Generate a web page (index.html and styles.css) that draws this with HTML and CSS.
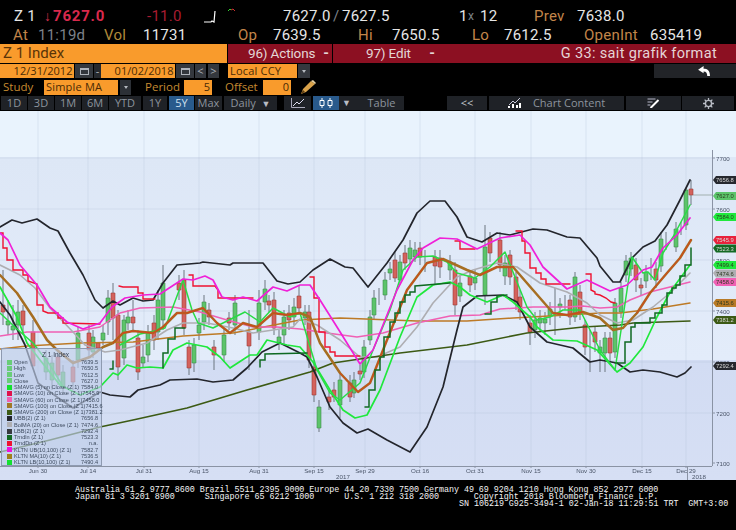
FILE: index.html
```html
<!DOCTYPE html>
<html lang="en">
<head>
<meta charset="utf-8">
<title>Z 1 Index</title>
<link rel="stylesheet" href="styles.css">
</head>
<body>
<div class="screen">
  <header class="quote">
    <div class="qrow qrow1">
      <span class="w">Z 1</span><span class="arrow">↓</span><span class="last">7627.0</span><span class="chg">-11.0</span>
      <svg class="spark" viewBox="0 0 14 16"><path d="M0 14H7L8 13L10 14L11 3" fill="none" stroke="#fff" stroke-width="1.2"/></svg>
      <svg class="mini" viewBox="0 0 8 4"><path d="M0 3L2 1L3 2" fill="none" stroke="#3c3" stroke-width="1"/><path d="M3 2L5 1L7 3" fill="none" stroke="#c33" stroke-width="1"/></svg>
      <span class="w">7627.0</span><span class="g">/</span><span class="w">7627.5</span><span class="w">1</span><span class="g sm">x</span><span class="w">12</span><span class="o">Prev</span><span class="w">7638.0</span>
    </div>
    <div class="qrow qrow2">
      <span class="o">At</span><span class="g">11:19d</span><span class="o2">Vol</span><span class="w">11731</span><span class="o">Op</span><span class="w">7639.5</span><span class="o">Hi</span><span class="w">7650.5</span><span class="o">Lo</span><span class="w">7612.5</span><span class="o">OpenInt</span><span class="w">635419</span>
    </div>
  </header>

  <div class="bars">
    <div class="bar-sec">Z 1 Index</div>
    <div class="bar-act bar-a"><span class="act-txt">96) Actions</span><span class="dash">-</span></div>
    <div class="bar-act bar-e"><span class="act-txt">97) Edit</span><span class="dash">-</span></div>
    <div class="bar-title">G 33: sait grafik format</div>
  </div>

  <div class="dates">
    <div class="fld f-date">12/31/2012</div>
    <div class="btn b-cal"><svg class="ico-cal" viewBox="0 0 9 8"><path d="M0 1H9V8H0Z" fill="#aeb3ba"/><path d="M1 3H8V7H1Z" fill="#33373d"/></svg></div>
    <div class="btn b-dash">-</div>
    <div class="fld f-date">01/02/2018</div>
    <div class="btn b-cal"><svg class="ico-cal" viewBox="0 0 9 8"><path d="M0 1H9V8H0Z" fill="#aeb3ba"/><path d="M1 3H8V7H1Z" fill="#33373d"/></svg></div>
    <div class="btn b-nav">&lt;</div>
    <div class="btn b-nav">&gt;</div>
    <div class="fld f-ccy">Local CCY</div>
    <div class="btn b-drop"><span class="tri"></span></div>
    <div class="undo"><svg class="ico-undo" viewBox="0 0 14 12"><path d="M0 4L6 0V3C10 3 13 5 13 11L10 11C10 8 9 6 6 6V8Z" fill="#fff"/></svg></div>
  </div>

  <div class="study">
    <span class="lab l-study">Study</span>
    <div class="fld f-study">Simple MA</div>
    <div class="btn b-drop2"><span class="tri"></span></div>
    <span class="lab l-period">Period</span>
    <div class="fld f-num">5</div>
    <span class="lab l-offset">Offset</span>
    <div class="fld f-num">0</div>
    <svg class="ico-pen" viewBox="0 0 15 14"><path d="M0 14L2 9L10 1L14 4L5 12Z" fill="#d9a24a"/><path d="M10 1L12 0L15 3L14 4Z" fill="#e8d3a5"/><path d="M0 14L2 10L4 12Z" fill="#5a3a10"/></svg>
  </div>

  <nav class="tools">
    <div class="t t-n">1D</div><div class="t t-n">3D</div><div class="t t-n">1M</div><div class="t t-n">6M</div>
    <div class="t t-ytd">YTD</div><div class="t t-1y">1Y</div><div class="t t-5y">5Y</div><div class="t t-max">Max</div>
    <div class="t t-daily">Daily <span class="dn">▼</span></div>
    <div class="t t-ic t-line"><svg class="ic14" viewBox="0 0 14 10"><path d="M0.5 0V9.5H14" fill="none" stroke="#aab" stroke-width="1"/><path d="M2 8L6 4L8 6L13 1" fill="none" stroke="#dde" stroke-width="1"/></svg></div>
    <div class="t t-ic t-candle"><svg class="ic14" viewBox="0 0 14 10"><path d="M3 0V10M11 0V10" stroke="#fff"/><path d="M1 2.500H5V7.500H1ZM9 2.500H13V7.500H9Z" fill="#295a8c" stroke="#fff"/></svg><span class="dn dn2">▼</span></div>
    <div class="t t-table">Table</div>
    <div class="t t-back">&lt;&lt;</div>
    <div class="t t-cc"><svg class="ic13" viewBox="0 0 13 10"><path d="M1 7L5 3L7 5L12 0" fill="none" stroke="#ccd" stroke-width="1"/><path d="M0 8H2V10H0ZM4 6H6V10H4ZM8 7H10V10H8ZM11 5H13V10H11Z" fill="#fff"/></svg><span>Chart Content</span></div>
    <div class="t t-edit"><svg class="ic13" viewBox="0 0 12 10"><path d="M0 1H8M0 4H5M0 7H3" stroke="#bbc" stroke-width="1"/><path d="M3 10L11 2" stroke="#fff" stroke-width="2"/></svg></div>
    <div class="t t-gear"><svg class="ic11" viewBox="0 0 12 12"><circle cx="6" cy="6" r="3.400" fill="none" stroke="#b8bcc4" stroke-width="1.600"/><path d="M6 0V2.500M6 9.500V12M0 6H2.500M9.500 6H12M1.800 1.800L3.500 3.500M8.500 8.500L10.200 10.200M1.800 10.200L3.500 8.500M8.500 3.500L10.200 1.800" stroke="#b8bcc4" stroke-width="1.400"/></svg></div>
  </nav>

  <main class="chart">
    <svg class="plot" viewBox="0 111 736 369" width="736" height="369">
      <defs>
        <linearGradient id="upper" x1="0" y1="0" x2="0" y2="1"><stop offset="0" stop-color="#dde7f6"/><stop offset="1" stop-color="#e3ecfa"/></linearGradient>
        <linearGradient id="lower" x1="0" y1="0" x2="0" y2="1"><stop offset="0" stop-color="#d2dcf3"/><stop offset="1" stop-color="#d6dff4"/></linearGradient>
      </defs>
      <rect x="0" y="111" width="736" height="46" fill="#e9f3fd"/>
      <rect x="0" y="157" width="736" height="203" fill="url(#upper)"/>
      <rect x="0" y="360" width="736" height="120" fill="url(#lower)"/>
      <path class="grid" d="M38 111V466M88 111V466M144 111V466M199 111V466M259 111V466M314 111V466M365 111V466M420 111V466M475 111V466M531 111V466M586 111V466M642 111V466M686 111V466M0 158H712M0 209H712M0 260H712M0 311H712M0 362H712M0 413H712"/>

      <path class="wick" d="M3 270V325M8 300V335M13 305V340M18 300V340M23 305V335M33 320V366M46 350V380M52 355V390M58 350V385M63 365V395M73 360V390M78 327V368M89 325V358M93 330V358M103 325V345M108 290V335M113 283V340M118 310V380M124 315V365M128 310V330M133 300V330M138 330V380M143 345V368M148 325V362M154 315V350M158 290V340M163 265V330M179 275V300M184 270V335M189 340V375M194 338V372M199 318V340M204 295V330M209 303V325M214 340V370M224 328V362M229 312V330M235 295V335M249 310V370M259 290V340M265 280V310M269 295V312M274 292V335M279 330V350M284 310V345M289 305V330M294 298V325M299 285V315M305 305V325M309 305V368M314 360V402M319 400V432M329 390V410M334 382V402M340 372V418M350 375V402M354 372V398M360 365V380M364 340V378M370 310V345M374 290V320M379 288V305M385 272V300M390 262V280M395 252V282M400 255V285M405 245V270M410 240V265M415 242V262M420 242V265M425 250V272M435 250V285M440 250V278M450 255V280M455 262V315M460 275V302M470 270V292M475 270V290M485 225V305M490 232V262M500 232V272M505 255V285M510 250V285M516 272V310M520 290V320M530 315V345M535 312V338M540 310V332M545 312V335M550 302V325M555 288V335M560 298V318M565 295V310M570 295V325M575 272V322M580 285V320M585 320V355M590 330V372M595 326V352M600 340V372M605 332V372M610 332V362M615 298V358M621 282V318M626 255V282M631 252V276M636 258V292M641 278V296M646 265V288M651 258V280M656 262V288M661 232V272M666 232V250M676 222V252M681 222V235M686 188V230M691 180V205"/>

      <path class="green-b" d="M6 321h4v4h-4zM11 326h4v4h-4zM16 312h4v13h-4zM44 358h4v14h-4zM50 363h4v17h-4zM61 372h4v15h-4zM76 333h4v27h-4zM91 337h4v15h-4zM101 333h4v7h-4zM106 298h4v24h-4zM122 320h4v38h-4zM126 317h4v6h-4zM141 357h4v6h-4zM146 333h4v22h-4zM156 300h4v32h-4zM161 283h4v37h-4zM192 345h4v18h-4zM197 325h4v8h-4zM202 302h4v20h-4zM222 335h4v20h-4zM233 303h4v22h-4zM257 303h4v29h-4zM263 289h4v13h-4zM277 337h4v6h-4zM282 317h4v18h-4zM292 307h4v10h-4zM303 312h4v6h-4zM317 407h4v21h-4zM338 380h4v25h-4zM352 380h4v13h-4zM362 347h4v25h-4zM368 317h4v23h-4zM372 298h4v17h-4zM383 280h4v15h-4zM388 269h4v4h-4zM398 262h4v18h-4zM408 248h4v11h-4zM413 250h4v7h-4zM448 262h4v8h-4zM458 283h4v13h-4zM473 278h4v5h-4zM483 247h4v48h-4zM503 263h4v13h-4zM533 320h4v10h-4zM538 318h4v5h-4zM543 319h4v4h-4zM548 309h4v7h-4zM558 304h4v3h-4zM573 277h4v40h-4zM598 347h4v6h-4zM603 338h4v15h-4zM613 303h4v49h-4zM619 288h4v24h-4zM624 261h4v14h-4zM629 258h4v11h-4zM644 272h4v9h-4zM659 239h4v27h-4zM674 229h4v18h-4zM684 190h4v35h-4z"/>
      <path class="red-b" d="M1 305h4v7h-4zM21 311h4v14h-4zM31 332h4v34h-4zM56 357h4v18h-4zM71 367h4v15h-4zM87 333h4v17h-4zM96 343h4v5h-4zM111 293h4v25h-4zM116 315h4v52h-4zM131 317h4v6h-4zM136 338h4v34h-4zM152 323h4v17h-4zM177 283h4v7h-4zM182 280h4v48h-4zM187 347h4v21h-4zM207 310h4v7h-4zM212 347h4v8h-4zM227 318h4v5h-4zM247 332h4v14h-4zM267 301h4v4h-4zM272 300h4v28h-4zM287 313h4v7h-4zM297 296h4v12h-4zM307 312h4v48h-4zM312 367h4v28h-4zM327 397h4v5h-4zM332 390h4v7h-4zM348 383h4v14h-4zM358 371h4v3h-4zM393 260h4v18h-4zM403 253h4v10h-4zM418 248h4v9h-4zM433 257h4v9h-4zM438 258h4v9h-4zM453 270h4v35h-4zM468 276h4v9h-4zM488 238h4v15h-4zM498 240h4v25h-4zM508 255h4v22h-4zM514 277h4v25h-4zM518 297h4v15h-4zM528 323h4v9h-4zM568 300h4v17h-4zM578 292h4v21h-4zM583 325h4v22h-4zM593 332h4v10h-4zM608 338h4v15h-4zM634 265h4v15h-4zM639 285h4v3h-4zM654 269h4v11h-4zM689 189h4v6h-4z"/>

      <path class="l-orange" d="M0 349L27 346L80 343L133 342L183 336L233 333L300 320L340 318L417 321L467 321L513 318L567 315L600 313L620 313L653 309L690 303"/>
      <path class="l-pink" d="M0 336L27 332L73 332L100 327L120 313L140 308L173 307L200 312L227 320L253 327L277 327L300 329L327 333L357 337L383 333L417 323L450 316L480 315L500 309L533 307L567 307L583 306L600 308L617 307L630 300L650 292L670 287L690 282"/>
      <path class="l-grey" d="M0 265L20 275L35 288L50 308L73 332L85 345L105 352L120 350L147 343L167 330L183 323L207 323L233 328L253 333L293 327L300 319L317 325L340 340L360 357L377 357L400 347L417 327L433 303L457 277L473 270L497 263L517 267L540 283L567 292L587 303L600 315L617 323L633 320L653 307L670 293L690 273"/>
      <path class="l-dkgreen" d="M0 452L50 440L100 427L133 420L187 408L247 390L310 372L333 363L400 353L467 345L527 333L583 327L620 325L633 323L690 321"/>
      <path class="l-black" d="M0 227L12 220L22 223L37 219L50 228L58 231L70 253L83 275L95 300L103 308L113 301L120 305L133 298L143 301L153 300L163 283L177 265L200 263L203 262L230 265L233 263L263 263L277 281L288 284L300 282L313 270L330 259L345 267L353 268L368 287L387 263L403 240L417 213L430 201L445 201L457 217L467 237L482 242L497 233L510 235L533 229L547 230L567 237L580 238L597 258L600 266L613 282L620 282L632 258L643 247L655 241L667 225L680 200L690 180"/>
      <path class="l-black" d="M0 302L10 315L25 345L38 383L57 397L73 408L90 398L100 392L110 395L130 397L138 390L160 385L170 380L197 379L213 382L233 380L247 368L262 352L280 343L300 353L307 357L317 377L330 407L343 423L357 433L368 429L387 440L410 452L427 427L443 387L457 330L463 307L477 296L503 295L517 302L530 327L547 342L573 348L590 362L600 360L617 363L630 372L643 370L660 372L677 377L685 373L691 367"/>
      <path class="l-lime" d="M0 287L17 317L27 343L40 360L60 385L80 395L100 387L113 373L118 375L127 365L137 368L150 367L163 368L173 350L187 343L207 347L220 357L230 368L250 355L257 355L267 340L287 345L300 347L313 362L330 390L343 410L355 418L367 415L380 390L400 337L417 297L433 285L450 282L460 287L470 295L487 302L503 295L513 302L530 317L537 327L553 340L577 341L597 350L617 372L630 363L643 347L657 317L670 292L690 265"/>
      <path class="l-lime2" d="M0 313L17 329L33 343L50 365L62 385M120 345L140 334L150 332L165 328L183 280L192 310L198 323L213 328L245 312L260 322L273 308L290 317L300 313L317 370L330 393L340 400L360 383L373 350L390 310L403 270L417 257L433 256L447 262L457 273L475 278L490 267L505 252L515 277L527 307L537 320L550 317L563 310L580 310L590 330L600 350L615 370L620 337L632 257L643 273L648 272L655 280L663 253L673 237L690 205"/>
      <path class="l-brown" d="M0 275L17 293L33 317L47 340L57 350L73 363L90 357L103 347L113 343L123 333L133 331L153 333L163 327L177 313L187 313L203 308L217 323L230 333L243 323L257 327L273 313L287 315L300 313L310 317L320 343L340 373L358 392L370 383L387 340L407 290L427 263L443 259L467 270L480 275L497 267L513 267L533 290L553 313L567 315L583 312L600 318L613 330L623 328L637 313L650 293L667 273L680 258L691 240"/>
      <path class="l-redline" d="M113 343L123 333L133 331L153 333L163 327L177 313L187 313L203 308L217 323L230 333L243 323L257 327L273 313L287 315L300 313M340 373L358 392L370 383L387 340L407 290L427 263L443 259M480 275L497 267L513 267M553 313L567 315L583 312M637 313L650 293L667 273L680 258L691 240"/>
      <path class="l-step-g" d="M110 369L113 369L113 361M163 368L163 353L168 353L168 339L175 339L175 328L185 328M260 367L260 360L265 360L265 354L307 353M365 407L369 407L369 390L375 390L375 370L380 370L380 357L384 357L384 337L390 337L390 322L395 322L395 313L400 313L400 302L405 302L405 295L410 295L410 292L415 292L415 286L450 283M485 314L491 314L491 302L497 302L497 296L507 295M615 363L625 363L625 342L631 342L631 327L635 327L635 323L650 323L650 318L655 318L655 313L662 313L662 305L667 305L667 293L672 293L672 288L676 288L676 285L680 285L680 276L685 276L685 265L691 265L691 248"/>
      <path class="l-step-r" d="M0 233L3 233L3 248L7 248L7 260L13 260L13 270L23 270L23 275L28 275L28 281L37 284L37 305L43 305L43 311L48 313L58 313L58 318L63 318L63 323L100 324M119 286L123 287L138 287L138 293L143 293L143 299L155 299M189 275L193 275L193 286L215 286L218 290L218 298L253 298M310 277L314 277L314 298L319 298L319 332L325 332L325 347L330 347L330 352L335 352L335 356L360 356M455 241L460 241L460 249L475 249M516 231L522 231L522 241L525 241L525 253L530 253L530 268L536 268L536 273L541 273L541 279L546 279L546 284L570 284M586 274L591 274L591 290L595 292L595 294L600 295L606 298L611 302L615 303"/>
      <path class="l-magenta" d="M0 233L8 240L20 265L37 285L50 307L67 322L83 329L100 323L112 307L125 298L143 295L160 294L183 279L193 280L205 276L213 280L222 297L233 300L243 297L257 301L273 287L287 291L300 285L310 285L320 300L337 327L360 364L373 350L397 290L413 260L423 248L440 238L457 239L477 249L500 238L520 235L530 245L543 267L567 289L587 280L610 291L627 285L643 270L652 267L663 248L677 235L690 218"/>

      <path class="axis" d="M712.500 150V466M0 466.500H712M687.500 466V480"/>
      <path class="axis" d="M712 158h3M712 209h3M712 260h3M712 311h3M712 362h3M712 413h3M712 463h3M38 466v2M88 466v2M144 466v2M199 466v2M259 466v2M314 466v2M365 466v2M420 466v2M475 466v2M531 466v2M586 466v2M642 466v2M686 466v2"/>
      <path class="guide" d="M693 195H713"/>

      <g class="ylab">
        <text x="716" y="160.500">7700</text><text x="716" y="211.500">7600</text><text x="716" y="262.500">7500</text><text x="716" y="313.500">7400</text><text x="716" y="364.500">7300</text><text x="716" y="415.500">7200</text><text x="716" y="465.500">7100</text>
      </g>
      <g class="xlab">
        <text x="38" y="473">Jun 30</text><text x="88" y="473">Jul 14</text><text x="144" y="473">Jul 31</text><text x="199" y="473">Aug 15</text><text x="259" y="473">Aug 31</text><text x="314" y="473">Sep 15</text><text x="365" y="473">Sep 29</text><text x="420" y="473">Oct 16</text><text x="475" y="473">Oct 31</text><text x="531" y="473">Nov 15</text><text x="586" y="473">Nov 30</text><text x="642" y="473">Dec 15</text><text x="686" y="473">Dec 29</text>
        <text x="343" y="479">2017</text><text x="699" y="479">2018</text>
      </g>
      <g class="tags">
        <path class="tg-black" d="M713 180L716 176H736V184H716Z"/><text class="tx-l" x="716" y="182">7656.8</text>
        <path class="tg-cl" d="M713 196L716 192H736V200H716Z"/><text x="716" y="198">7627.0</text>
        <path class="tg-lime" d="M713 217L716 213H736V221H716Z"/><text x="716" y="219">7584.0</text>
        <path class="tg-red" d="M713 240L716 236H736V244H716Z"/><text class="tx-l" x="716" y="242">7545.9</text>
        <path class="tg-dk" d="M713 248L716 244.500H736V252.500H716Z"/><text class="tx-l" x="716" y="250.500">7523.3</text>
        <path class="tg-lime" d="M713 265L716 261H736V269H716Z"/><text x="716" y="267">7499.4</text>
        <path class="tg-grey" d="M713 273L716 269.500H736V277.500H716Z"/><text x="716" y="275.500">7474.6</text>
        <path class="tg-pink" d="M713 282L716 278H736V286H716Z"/><text x="716" y="284">7458.0</text>
        <path class="tg-or" d="M713 303L716 299H736V307H716Z"/><text x="716" y="305">7415.6</text>
        <path class="tg-ol" d="M713 320L716 316H736V324H716Z"/><text class="tx-l" x="716" y="322">7381.2</text>
        <path class="tg-black" d="M713 366L716 362H736V370H716Z"/><text class="tx-l" x="716" y="368">7292.4</text>
      </g>
    </svg>

    <aside class="legend">
      <div class="lg-title">Z 1 Index</div>
      <div class="lg-row"><i class="sw s-pale"></i><span>Open</span><b>7639.5</b></div>
      <div class="lg-row"><i class="sw s-pale"></i><span>High</span><b>7650.5</b></div>
      <div class="lg-row"><i class="sw s-pale"></i><span>Low</span><b>7612.5</b></div>
      <div class="lg-row"><i class="sw s-pale"></i><span>Close</span><b>7627.0</b></div>
      <div class="lg-row"><i class="sw s-lime"></i><span>SMAVG (5) on Close (Z 1)</span><b>7584.0</b></div>
      <div class="lg-row"><i class="sw s-crim"></i><span>SMAVG (10) on Close (Z 1)</span><b>7545.9</b></div>
      <div class="lg-row"><i class="sw s-pink"></i><span>SMAVG (60) on Close (Z 1)</span><b>7458.0</b></div>
      <div class="lg-row"><i class="sw s-brown"></i><span>SMAVG (100) on Close (Z 1)</span><b>7415.6</b></div>
      <div class="lg-row"><i class="sw s-olive"></i><span>SMAVG (200) on Close (Z 1)</span><b>7381.2</b></div>
      <div class="lg-row"><i class="sw s-black"></i><span>UBB(2) (Z 1)</span><b>7656.8</b></div>
      <div class="lg-row"><i class="sw s-grey"></i><span>BolMA (20) on Close (Z 1)</span><b>7474.6</b></div>
      <div class="lg-row"><i class="sw s-dark"></i><span>LBB(2) (Z 1)</span><b>7292.4</b></div>
      <div class="lg-row"><i class="sw s-green"></i><span>Trndln (Z 1)</span><b>7523.3</b></div>
      <div class="lg-row"><i class="sw s-red"></i><span>TrndDn (Z 1)</span><b>n.a.</b></div>
      <div class="lg-row"><i class="sw s-mag"></i><span>KLTN UB(10,100) (Z 1)</span><b>7582.7</b></div>
      <div class="lg-row"><i class="sw s-gold"></i><span>KLTN MA(10) (Z 1)</span><b>7536.5</b></div>
      <div class="lg-row"><i class="sw s-lime"></i><span>KLTN LB(10,100) (Z 1)</span><b>7490.4</b></div>
    </aside>
  </main>

  <footer class="foot">
    <div class="foot-l">Australia 61 2 9777 8600 Brazil 5511 2395 9000 Europe 44 20 7330 7500 Germany 49 69 9204 1210 Hong Kong 852 2977 6000</div>
    <div class="foot-l">Japan 81 3 3201 8900      Singapore 65 6212 1000      U.S. 1 212 318 2000       Copyright 2018 Bloomberg Finance L.P.</div>
    <div class="foot-l foot-sn">SN 106219 G925-3494-1 02-Jan-18 11:29:51 TRT  GMT+3:00</div>
  </footer>
</div>
</body>
</html>
```
FILE: styles.css
```css
* { box-sizing: border-box; }
html, body { margin: 0; padding: 0; background: #000; }
.screen { width: 736px; height: 530px; overflow: hidden; background: #000; font-family: Roboto, "Liberation Sans", sans-serif; }

/* quote rows */
.quote { padding-top: 5px; height: 44px; font-size: 15px; letter-spacing: .25px; }
.qrow { display: grid; align-items: center; }
.qrow1 { height: 21px; padding-left: 14px; grid-template-columns: 30px 9px 94px 57px 24px 55px 50px 9px 117px 9px 12px 54px 43px 1fr; }
.qrow2 { height: 18px; padding-left: 13px; grid-template-columns: 25px 66px 39px 95px 35px 85px 34px 80px 32px 80px 66px 1fr; }
.w { color: #e6e6e6; }
.g { color: #7d8289; }
.sm { font-size: 12px; }
.o { color: #c2854a; }
.o2 { color: #b08a3a; }
.arrow { color: #d32f4d; font-size: 14px; }
.last { color: #d8294c; font-weight: 700; letter-spacing: .8px; }
.chg { color: #a81c30; }
.spark { width: 14px; height: 16px; }
.mini { width: 8px; height: 4px; align-self: start; margin-top: 3px; }

/* function bars */
.bars { display: flex; height: 19px; font-size: 14.500px; line-height: 19px; }
.bar-sec { width: 227px; background: #f99b2c; color: #5a3408; padding-left: 3px; font-size: 15px; }
.bar-act { background: #8c1022; color: #e4d6d6; display: flex; justify-content: space-between; margin-left: 1px; padding-right: 3px; }
.act-txt { white-space: nowrap; letter-spacing: -.15px; font-size: 13.500px; }
.bar-a { width: 104px; padding-left: 20px; }
.bar-e { width: 105px; padding-left: 33px; }
.dash { font-weight: 700; }
.bar-title { flex: 1; background: #8c1022; color: #e6d4d6; text-align: right; padding-right: 19px; letter-spacing: .35px; }

/* date row */
.dates, .study { display: flex; align-items: stretch; height: 14px; margin-top: 1px; font-family: "Open Sans", "Liberation Sans", sans-serif; font-size: 11px; line-height: 14px; }
.fld { background: #f99b2c; color: #4a2a05; white-space: nowrap; }
.btn { background: #34383e; color: #aeb3ba; display: flex; align-items: center; justify-content: center; }
.f-date { width: 74px; text-align: right; padding-right: 1.500px; letter-spacing: .05px; }
.b-cal { width: 18px; margin-left: 1px; margin-right: 1px; }
.b-dash { width: 7px; background: #26292e; }
.b-nav { width: 11px; margin-right: 2px; }
.f-ccy { width: 69px; margin-left: 7px; padding-left: 2px; letter-spacing: .2px; }
.b-drop { width: 12px; margin-left: 1px; }
.tri { width: 0; height: 0; border-left: 2.500px solid transparent; border-right: 2.500px solid transparent; border-top: 3px solid #b5bac0; }
.ico-cal { width: 9px; height: 8px; }
.undo { width: 82px; margin-left: auto; background: #222428; display: flex; align-items: center; padding-left: 44px; }
.ico-undo { width: 13px; height: 11px; }

/* study row */
.study { height: 15px; margin-top: 2px; }
.lab { color: #c58a30; font-size: 11.500px; }
.l-study { width: 44px; padding-left: 3px; }
.f-study { width: 74px; padding-left: 2px; letter-spacing: .2px; }
.b-drop2 { width: 11px; margin-left: 2px; background: #2c3036; }
.l-period { margin-left: 14px; width: 39px; }
.f-num { width: 28px; text-align: right; padding-right: 2px; }
.l-offset { margin-left: 13px; width: 38px; }
.ico-pen { width: 15px; height: 14px; margin-left: 10px; }

/* toolbar */
.tools { display: flex; height: 14px; margin-top: 1px; font-family: "Open Sans", "Liberation Sans", sans-serif; font-size: 11px; line-height: 14px; color: #8d949d; }
.t { background: #1f2227; text-align: center; margin-right: 1px; white-space: nowrap; }
.t-n { width: 26px; }
.t-n:first-child { margin-left: 1px; }
.t-ytd { width: 32px; margin-right: 2px; }
.t-1y { width: 24px; margin-right: 2px; }
.t-5y { width: 25px; background: #295a8c; color: #cfe0f0; }
.t-max { width: 27px; margin-right: 2px; }
.t-daily { width: 53px; margin-right: 7px; }
.dn { font-size: 9px; color: #b8bcc4; margin-left: 3px; }
.t-ic { display: flex; align-items: center; justify-content: center; }
.t-line { width: 27px; margin-right: 2px; }
.t-candle { width: 46px; background: linear-gradient(90deg, #295a8c 56%, #1f2227 56%); margin-right: 0; justify-content: flex-start; padding-left: 6px; }
.dn2 { margin-left: 9px; }
.t-table { width: 45px; margin-right: 43px; }
.t-back { width: 40px; color: #c4c8ce; margin-right: 2px; }
.t-cc { width: 135px; margin-right: 2px; display: flex; align-items: center; justify-content: center; gap: 12px; }
.t-edit { width: 55px; display: flex; align-items: center; justify-content: center; }
.t-gear { width: 52px; display: flex; align-items: center; justify-content: center; }
.ic14 { width: 14px; height: 10px; }
.ic13 { width: 13px; height: 10px; }
.ic11 { width: 11px; height: 11px; }

/* chart */
.chart { position: relative; height: 369px; margin-top: 1px; overflow: hidden; }
.plot { display: block; filter: blur(.35px); }
.grid { stroke: #a9bbd4; stroke-opacity: .25; stroke-width: 1; fill: none; }
.wick { stroke: #6d7680; stroke-width: 1; fill: none; }
.green-b { fill: #5cc46a; stroke: #3f8f4d; stroke-width: .6; }
.red-b { fill: #d4625c; stroke: #9b3c3a; stroke-width: .6; }
.l-orange, .l-pink, .l-grey, .l-dkgreen, .l-black, .l-lime, .l-lime2, .l-brown, .l-redline, .l-step-g, .l-step-r, .l-magenta { fill: none; stroke-linejoin: round; stroke-linecap: round; }
.l-orange { stroke: #bd7a26; stroke-width: 1.500; }
.l-pink { stroke: #f060b4; stroke-width: 1.500; }
.l-grey { stroke: #aeaeb2; stroke-width: 1.600; }
.l-dkgreen { stroke: #3c5a14; stroke-width: 1.700; }
.l-black { stroke: #23252c; stroke-width: 1.700; }
.l-lime { stroke: #1fe83c; stroke-width: 1.700; }
.l-lime2 { stroke: #28dc46; stroke-width: 1.500; }
.l-brown { stroke: #a66e22; stroke-width: 2.500; }
.l-redline { stroke: #d8401c; stroke-width: 1; }
.l-step-g { stroke: #0f6a22; stroke-width: 1.500; stroke-linejoin: miter; }
.l-step-r { stroke: #ee1230; stroke-width: 1.400; stroke-linejoin: miter; }
.l-magenta { stroke: #f020d8; stroke-width: 1.700; }
.axis { stroke: #8a93a4; stroke-width: 1; fill: none; }
.guide { stroke: #7a8a80; stroke-width: .6; fill: none; }
.ylab text { font: 6.200px "Liberation Sans", sans-serif; fill: #4a5568; }
.xlab text { font: 6.200px "Liberation Sans", sans-serif; fill: #4a5568; text-anchor: middle; }
.tags text { font: 5.800px "Liberation Sans", sans-serif; fill: #2c3a20; }
.tags .tx-l { fill: #d8d8d8; }
.tg-black { fill: #26282e; }
.tg-cl { fill: #5cc46a; }
.tg-lime { fill: #1fe83c; }
.tg-red { fill: #e8223c; }
.tg-dk { fill: #146a24; }
.tg-grey { fill: #aeaeb2; }
.tg-pink { fill: #f060b4; }
.tg-or { fill: #b87a26; }
.tg-ol { fill: #3c5a14; }

/* legend */
.legend { position: absolute; left: 1px; top: 237px; width: 101px; height: 118px; padding: 3px 3px 0 5px; background: rgba(190, 205, 232, .66); border: 1px solid #8e9ab0; font: 5.600px/6.270px "Liberation Sans", sans-serif; color: #3f4c60; filter: blur(.25px); }
.lg-title { height: 6px; padding-left: 35px; margin-bottom: 1px; color: #333c4c; font-size: 6.500px; }
.lg-row { display: flex; align-items: center; height: 6.270px; white-space: nowrap; }
.lg-row span { flex: 1; padding-left: 2px; }
.lg-row b { font-weight: 400; width: 17px; text-align: right; }
.sw { width: 5px; height: 5px; flex: none; }
.s-pale { background: #69cd78; }
.s-lime { background: #14e030; }
.s-crim { background: #e0104c; }
.s-pink { background: #f060b4; }
.s-brown { background: #a07828; }
.s-olive { background: #3c5a14; }
.s-black { background: #22242c; }
.s-grey { background: #aeaeb2; }
.s-dark { background: #383a40; }
.s-green { background: #146a24; }
.s-red { background: #ee1230; }
.s-mag { background: #f010e0; }
.s-gold { background: #a08018; }

/* footer */
.foot { padding: 7px 0 0 75px; height: 50px; color: #f4f4f4; font: 8.400px/7px "Liberation Mono", monospace; letter-spacing: -.04px; }
.foot-l { white-space: pre; height: 7px; }
.foot-sn { padding-left: 384px; }
```
